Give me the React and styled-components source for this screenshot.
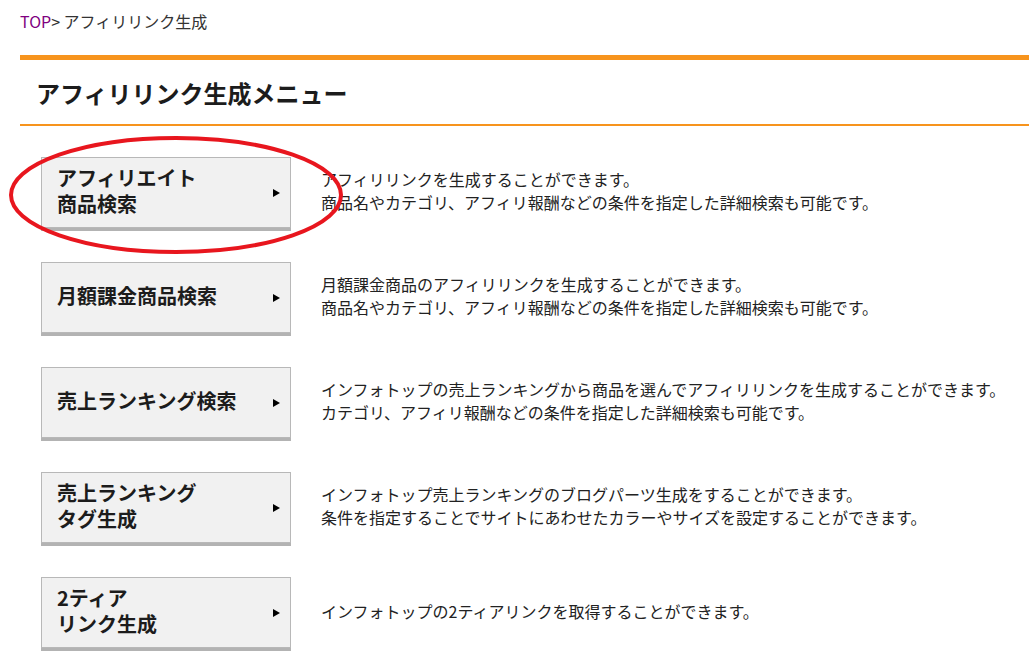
import React from "react";
import styled, { createGlobalStyle } from "styled-components";

const GlobalStyle = createGlobalStyle`
  html, body {
    margin: 0;
    padding: 0;
    background: #fff;
  }
  body {
    font-family: "Noto Sans CJK JP", "Noto Sans", sans-serif;
    color: #222;
    overflow: hidden;
  }
`;

const Page = styled.div`
  position: relative;
  padding: 9px 0 0 20px;
`;

const Breadcrumb = styled.div`
  font-size: 16px;
  line-height: 24px;
  color: #333;
  a {
    color: #800080;
    text-decoration: none;
  }
`;

const MenuBox = styled.section`
  margin-top: 22px;
  border-top: 5px solid #f7941d;
`;

const Title = styled.h1`
  margin: 0;
  padding: 0 0 0 16px;
  height: 64px;
  display: flex;
  align-items: center;
  font-size: 24px;
  font-weight: 700;
  color: #1c1c1c;
  border-bottom: 2px solid #f7941d;
`;

const List = styled.ul`
  list-style: none;
  margin: 0;
  padding: 31px 0 0 21px;
`;

const Row = styled.li`
  display: flex;
  align-items: center;
  margin-bottom: 34px;
`;

const MenuButton = styled.a`
  box-sizing: border-box;
  flex: 0 0 auto;
  width: 250px;
  height: 71px;
  display: flex;
  align-items: center;
  justify-content: space-between;
  padding: 0 10px 3px 15px;
  background: #f1f1f1;
  border: 1px solid #b8b8b8;
  box-shadow: 0 3px 0 #b3b3b3;
  color: #1c1c1c;
  font-size: 20px;
  font-weight: 700;
  line-height: 26px;
  text-decoration: none;
`;

const Arrow = styled.span`
  width: 0;
  height: 0;
  margin-top: 3px;
  border-left: 7px solid #000;
  border-top: 4px solid transparent;
  border-bottom: 4px solid transparent;
`;

const Desc = styled.p`
  margin: 0 0 3px 30px;
  font-size: 16px;
  line-height: 23px;
  color: #222;
`;

const Annotation = styled.svg`
  position: absolute;
  left: 8px;
  top: 134px;
  pointer-events: none;
`;

const items = [
  {
    label: ["アフィリエイト", "商品検索"],
    desc: [
      "アフィリリンクを生成することができます。",
      "商品名やカテゴリ、アフィリ報酬などの条件を指定した詳細検索も可能です。",
    ],
  },
  {
    label: ["月額課金商品検索"],
    desc: [
      "月額課金商品のアフィリリンクを生成することができます。",
      "商品名やカテゴリ、アフィリ報酬などの条件を指定した詳細検索も可能です。",
    ],
  },
  {
    label: ["売上ランキング検索"],
    desc: [
      "インフォトップの売上ランキングから商品を選んでアフィリリンクを生成することができます。",
      "カテゴリ、アフィリ報酬などの条件を指定した詳細検索も可能です。",
    ],
  },
  {
    label: ["売上ランキング", "タグ生成"],
    desc: [
      "インフォトップ売上ランキングのブログパーツ生成をすることができます。",
      "条件を指定することでサイトにあわせたカラーやサイズを設定することができます。",
    ],
  },
  {
    label: ["2ティア", "リンク生成"],
    desc: ["インフォトップの2ティアリンクを取得することができます。"],
  },
];

const Lines = ({ lines }) =>
  lines.map((l, i) => (
    <React.Fragment key={i}>
      {i > 0 && <br />}
      {l}
    </React.Fragment>
  ));

export default function App() {
  return (
    <>
      <GlobalStyle />
      <Page>
        <Breadcrumb>
          <a href="#">TOP</a>&gt; アフィリリンク生成
        </Breadcrumb>
        <MenuBox>
          <Title>アフィリリンク生成メニュー</Title>
          <List>
            {items.map((it, i) => (
              <Row key={i}>
                <MenuButton href="#">
                  <span>
                    <Lines lines={it.label} />
                  </span>
                  <Arrow />
                </MenuButton>
                <Desc>
                  <Lines lines={it.desc} />
                </Desc>
              </Row>
            ))}
          </List>
        </MenuBox>
        {/* red circle drawn around the first button */}
        <Annotation width="340" height="124" viewBox="0 0 340 124">
          <ellipse
            cx="168"
            cy="61"
            rx="165"
            ry="57"
            fill="none"
            stroke="#e8161e"
            strokeWidth="4"
          />
        </Annotation>
      </Page>
    </>
  );
}
